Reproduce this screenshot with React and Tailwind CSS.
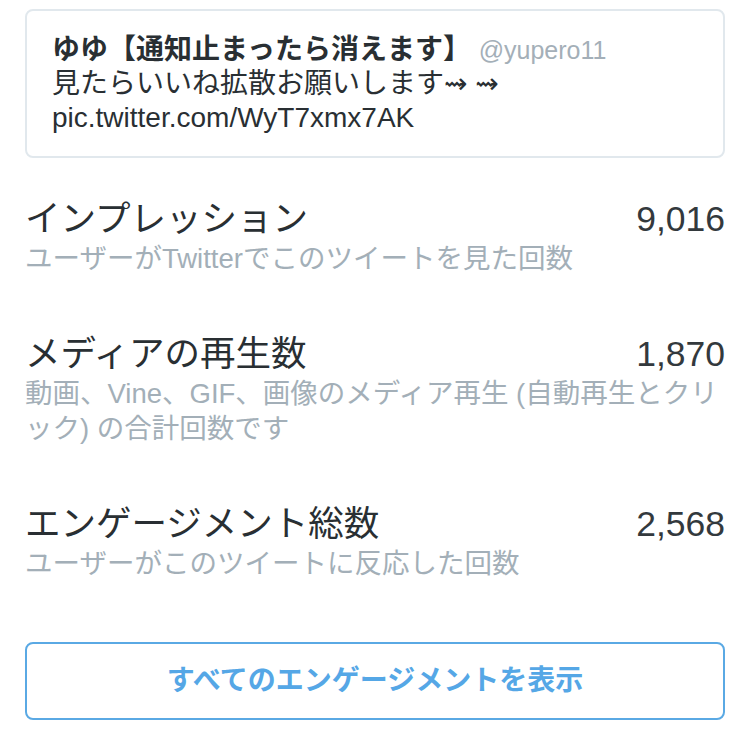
const FONT = '"Liberation Sans", "Noto Sans CJK JP", "DejaVu Sans", sans-serif';

const STATS = [
  { label: 'インプレッション', value: '9,016', note: 'ユーザーがTwitterでこのツイートを見た回数' },
  { label: 'メディアの再生数', value: '1,870', note: '動画、Vine、GIF、画像のメディア再生 (自動再生とクリック) の合計回数です' },
  { label: 'エンゲージメント総数', value: '2,568', note: 'ユーザーがこのツイートに反応した回数' },
];

function StatRow({ label, value, note }) {
  return (
    <div className="py-[28px]">
      <div className="flex justify-between items-center text-[35.5px] leading-[44px] text-[#292f33]">
        <span>{label}</span>
        <span className="text-[#33393d]">{value}</span>
      </div>
      <p className="text-[27.5px] leading-[35px] text-[#a3afb8]">{note}</p>
    </div>
  );
}

export default function App() {
  return (
    <div className="min-h-[733px] bg-white px-[25px] pt-[9px] pb-[14px]" style={{ fontFamily: FONT }}>
      {/* ツイート本文 */}
      <div className="rounded-[8px] border-2 border-[#e1e8ed] px-[25px] pt-[22px] pb-[21px] text-[28px] leading-[34px] text-[#292f33]">
        <div>
          <span className="font-bold">ゆゆ【通知止まったら消えます】</span>{' '}
          <span className="text-[25px] text-[#a4afb8]">@yupero11</span>
        </div>
        <div>見たらいいね拡散お願いします⇝ ⇝</div>
        <div>pic.twitter.com/WyT7xmx7AK</div>
      </div>

      <div className="mt-[11px]">
        {STATS.map((s) => (
          <StatRow key={s.label} {...s} />
        ))}
      </div>

      <button className="mt-[33px] flex h-[78px] w-full items-center justify-center rounded-[8px] border-2 border-[#5aa9e4] text-[28px] font-bold text-[#55a7e6]">
        すべてのエンゲージメントを表示
      </button>
    </div>
  );
}
